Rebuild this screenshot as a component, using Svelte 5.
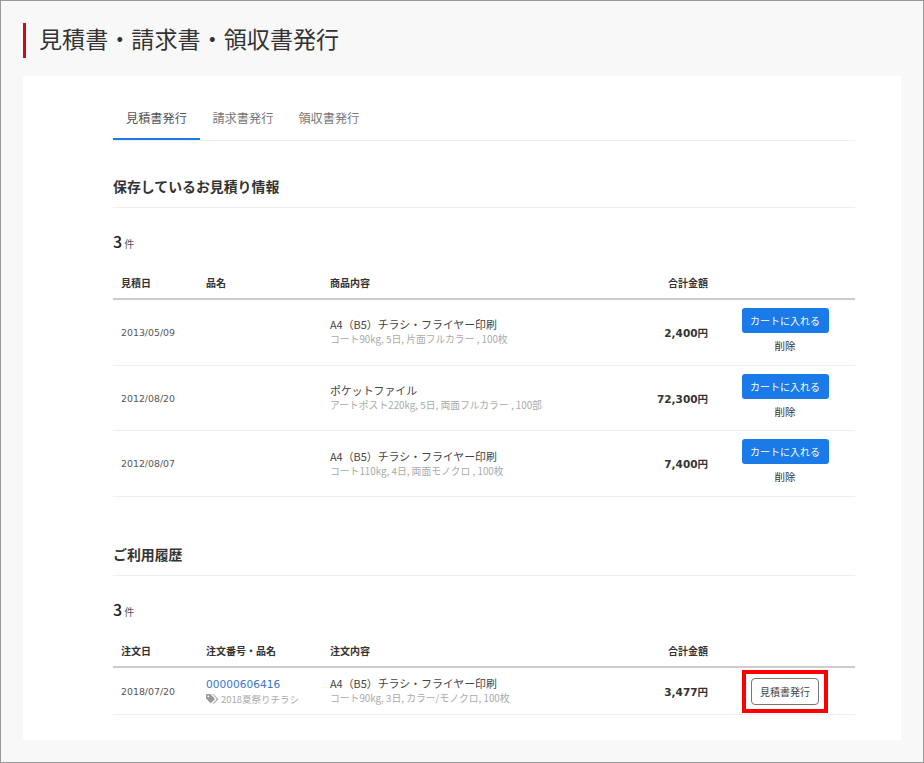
<script>
	const quotes = [
		{ date: "2013/05/09", title: "A4（B5）チラシ・フライヤー印刷", spec: "コート90kg, 5日, 片面フルカラー , 100枚", price: "2,400" },
		{ date: "2012/08/20", title: "ポケットファイル", spec: "アートポスト220kg, 5日, 両面フルカラー , 100部", price: "72,300" },
		{ date: "2012/08/07", title: "A4（B5）チラシ・フライヤー印刷", spec: "コート110kg, 4日, 両面モノクロ , 100枚", price: "7,400" }
	]
</script>

<div class="page">
	<h1>見積書・請求書・領収書発行</h1>

	<main>
		<nav>
			<span class="tab active">見積書発行</span>
			<span class="tab">請求書発行</span>
			<span class="tab">領収書発行</span>
		</nav>

		<h2>保存しているお見積り情報</h2>
		<p class="count"><b>3</b> 件</p>
		<table>
			<thead>
				<tr>
					<th class="c1">見積日</th>
					<th class="c2">品名</th>
					<th>商品内容</th>
					<th class="num">合計金額</th>
					<th class="c5"></th>
				</tr>
			</thead>
			<tbody>
				{#each quotes as q}
					<tr class="quote">
						<td class="date">{q.date}</td>
						<td></td>
						<td>
							<div class="title">{q.title}</div>
							<div class="spec">{q.spec}</div>
						</td>
						<td class="num price">{q.price}円</td>
						<td class="act">
							<button class="cart">カートに入れる</button>
							<div class="del">削除</div>
						</td>
					</tr>
				{/each}
			</tbody>
		</table>

		<h2 class="second">ご利用履歴</h2>
		<p class="count"><b>3</b> 件</p>
		<table>
			<thead>
				<tr>
					<th class="c1">注文日</th>
					<th class="c2">注文番号・品名</th>
					<th>注文内容</th>
					<th class="num">合計金額</th>
					<th class="c5"></th>
				</tr>
			</thead>
			<tbody>
				<tr class="order">
					<td class="date">2018/07/20</td>
					<td>
						<div class="link">00000606416</div>
						<div class="spec tagged">
							<svg width="12" height="10" viewBox="0 0 12 10"><path d="M0 1.2C0 .5.5 0 1.2 0h3.1l4 4c.5.5.5 1.200 0 1.700L5.600 8.500c-.5.5-1.200.5-1.700 0L0 4.500z" fill="#999"/><path d="M6 0h1l4.500 4.300c.6.6.6 1.100 0 1.700L8.300 9.300c-.4.4-1 .5-1.500.2l3.400-3.500c.6-.6.600-1.300 0-1.900z" fill="#999"/><circle cx="2.300" cy="2.300" r=".9" fill="#fff"/></svg>
							2018夏祭りチラシ
						</div>
					</td>
					<td>
						<div class="title">A4（B5）チラシ・フライヤー印刷</div>
						<div class="spec">コート90kg, 3日, カラー/モノクロ, 100枚</div>
					</td>
					<td class="num price">3,477円</td>
					<td class="act">
						<span class="mark"><button class="issue">見積書発行</button></span>
					</td>
				</tr>
			</tbody>
		</table>
	</main>
</div>

<style>
	:global(body) {
		margin: 0;
		background: #f8f8f8;
	}
	.page {
		box-sizing: border-box;
		width: 924px;
		height: 763px;
		border: 1px solid #999;
		padding: 22px 22px 0;
		font-family: "DejaVu Sans", "Noto Sans CJK JP", sans-serif;
		color: #333;
		overflow: hidden;
	}
	h1 {
		margin: 0 0 18px;
		height: 35px;
		border-left: 3px solid #cc0a10;
		padding-left: 13px;
		font-family: "Noto Sans CJK JP", sans-serif;
		font-size: 23.100px;
		font-weight: 400;
		line-height: 30px;
	}
	main {
		background: #fff;
		height: 664px;
		width: 878px;
		box-sizing: border-box;
		padding: 20px 46px 0 90px;
	}
	nav {
		display: flex;
		height: 44px;
		border-bottom: 1px solid #eee;
	}
	.tab {
		padding: 0 12.500px;
		line-height: 44px;
		font-family: "Noto Sans CJK JP", sans-serif;
		font-size: 12.200px;
		color: #777;
	}
	.tab.active {
		height: 42px;
		color: #555;
		border-bottom: 2px solid #1a7ae8;
		padding: 0 13px;
		line-height: 44px;
	}
	h2 {
		margin: 35px 0 0;
		height: 31px;
		border-bottom: 1px solid #eee;
		font-family: "Noto Sans CJK JP", sans-serif;
		font-size: 13.900px;
		font-weight: 700;
		line-height: 21px;
		color: #333;
	}
	h2.second {
		margin-top: 47px;
	}
	.count {
		margin: 22px 0 0;
		height: 22px;
		font-size: 10px;
		line-height: 22px;
		color: #555;
		font-family: "Noto Sans CJK JP", sans-serif;
	}
	.count b {
		font-size: 16px;
		font-weight: 500;
		color: #222;
	}
	table {
		width: 742px;
		border-collapse: collapse;
		table-layout: fixed;
		margin-top: 11px;
	}
	th {
		padding: 12px 0 8px;
		line-height: 15px;
		border-bottom: 2px solid #ccc;
		font-family: "Noto Sans CJK JP", sans-serif;
		font-size: 10px;
		font-weight: 700;
		text-align: left;
		color: #333;
	}
	.c1 {
		width: 85px;
		padding-left: 8px;
	}
	.c2 {
		width: 124px;
	}
	th.num {
		width: 90px;
		text-align: right;
	}
	.c5 {
		width: 147px;
	}
	td {
		padding: 0;
		border-bottom: 1px solid #eee;
		vertical-align: middle;
	}
	.quote td {
		height: 64.700px;
	}
	.order td {
		height: 46px;
	}
	.date {
		padding-left: 8px;
		font-size: 9.400px;
		color: #555;
	}
	.title {
		font-family: "Noto Sans CJK JP", sans-serif;
		font-size: 10.900px;
		line-height: 15px;
		color: #444;
	}
	.spec {
		font-family: "Noto Sans CJK JP", sans-serif;
		font-size: 9.800px;
		line-height: 15px;
		color: #aaa;
		white-space: nowrap;
	}
	.tagged {
		display: flex;
		align-items: center;
		gap: 3px;
		font-size: 9.500px;
	}
	.link {
		font-size: 10.600px;
		line-height: 16px;
		color: #3a78c9;
	}
	.num {
		text-align: right;
	}
	.price {
		font-size: 10.500px;
		font-weight: 700;
		color: #333;
	}
	td.act {
		text-align: center;
		padding-left: 7px;
	}
	.quote td.act {
		vertical-align: top;
		padding-top: 8px;
		height: 56.700px;
	}
	.cart {
		display: block;
		margin: 0 auto;
		width: 87px;
		height: 25px;
		padding: 0;
		border: 0;
		border-radius: 3px;
		background: #1a7ae8;
		color: #fff;
		font-family: "Noto Sans CJK JP", sans-serif;
		font-size: 10px;
	}
	.del {
		margin-top: 5px;
		font-family: "Noto Sans CJK JP", sans-serif;
		font-size: 10.500px;
		line-height: 15px;
		color: #333;
	}
	.mark {
		display: inline-block;
		vertical-align: middle;
		border: 4px solid #f00;
		padding: 4px 5px;
	}
	.issue {
		display: block;
		width: 68px;
		height: 27px;
		padding: 0;
		border: 1px solid #777;
		border-radius: 4px;
		background: #fff;
		color: #444;
		font-family: "Noto Sans CJK JP", sans-serif;
		font-size: 10px;
	}
</style>
